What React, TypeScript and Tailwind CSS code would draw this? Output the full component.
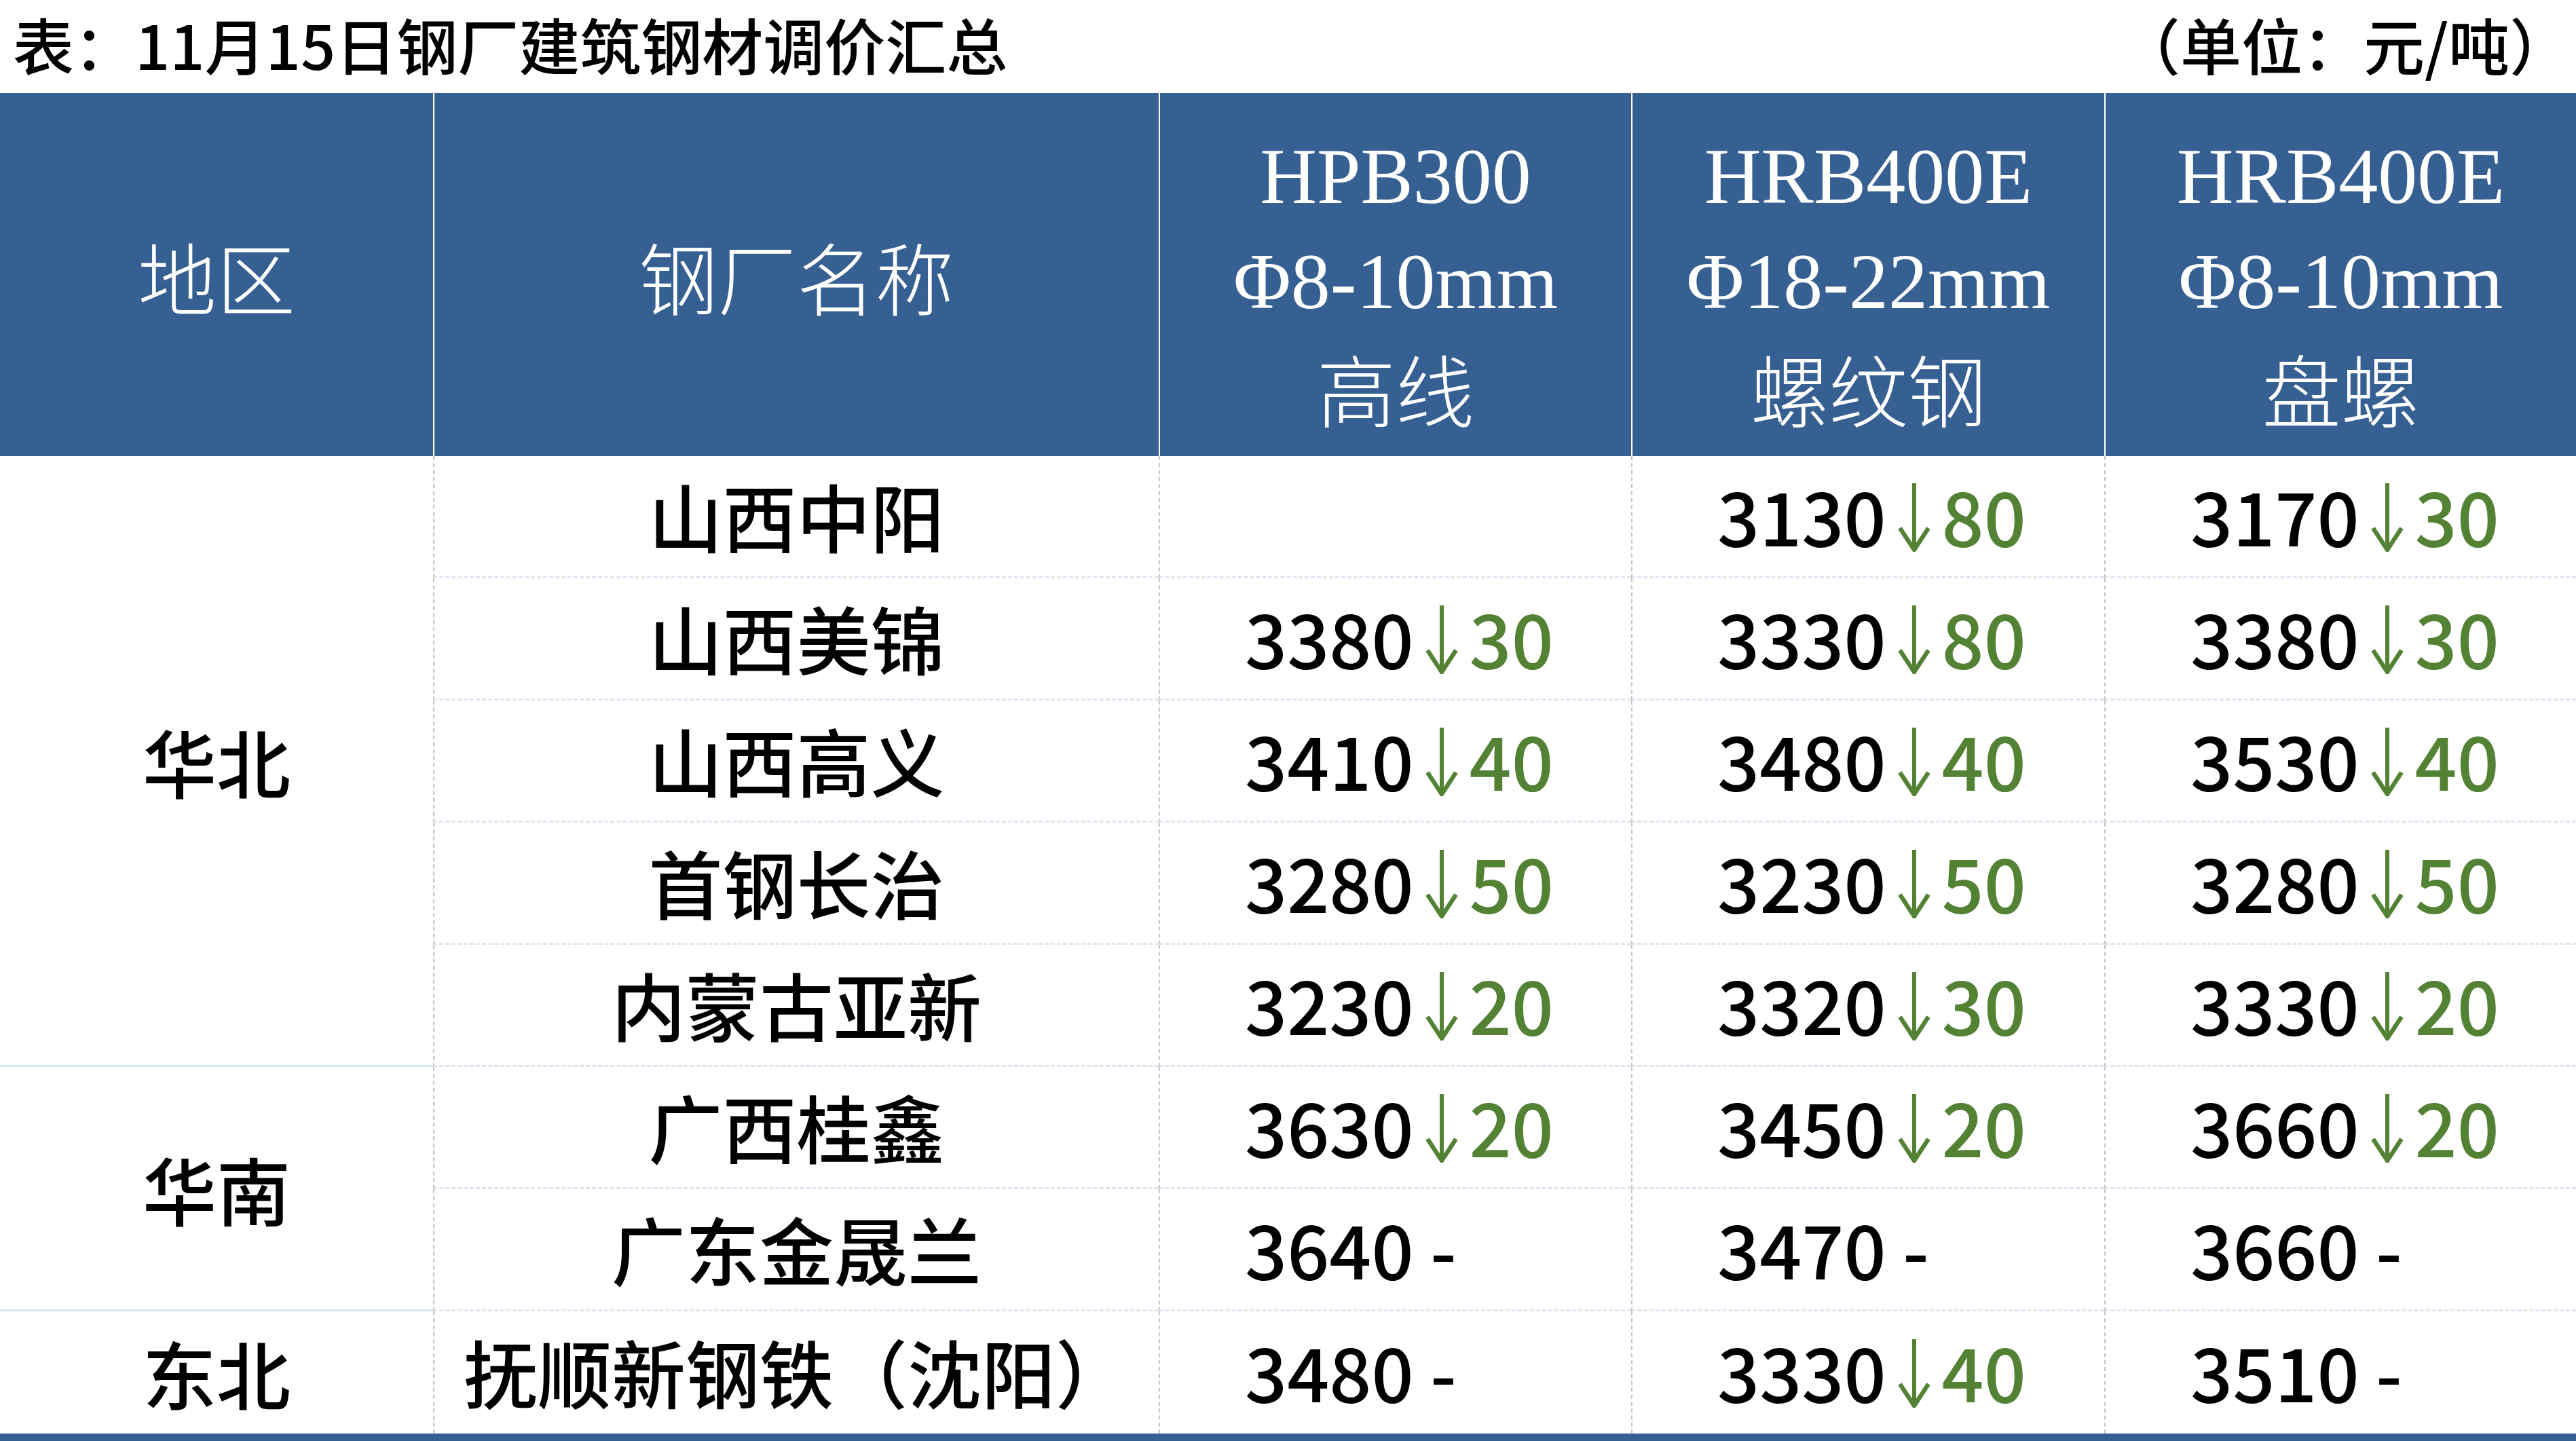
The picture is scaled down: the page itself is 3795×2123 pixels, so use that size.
const CJK = '"Noto Sans CJK SC", "Noto Sans", sans-serif';
const SERIF = '"Liberation Serif", "Noto Sans CJK SC", serif';

type Price = { base: string; change?: string };

type Row = {
  mill: string;
  prices: (Price | null)[];
};

const groups: { region: string; rows: Row[] }[] = [
  {
    region: '华北',
    rows: [
      { mill: '山西中阳', prices: [null, { base: '3130', change: '80' }, { base: '3170', change: '30' }] },
      { mill: '山西美锦', prices: [{ base: '3380', change: '30' }, { base: '3330', change: '80' }, { base: '3380', change: '30' }] },
      { mill: '山西高义', prices: [{ base: '3410', change: '40' }, { base: '3480', change: '40' }, { base: '3530', change: '40' }] },
      { mill: '首钢长治', prices: [{ base: '3280', change: '50' }, { base: '3230', change: '50' }, { base: '3280', change: '50' }] },
      { mill: '内蒙古亚新', prices: [{ base: '3230', change: '20' }, { base: '3320', change: '30' }, { base: '3330', change: '20' }] },
    ],
  },
  {
    region: '华南',
    rows: [
      { mill: '广西桂鑫', prices: [{ base: '3630', change: '20' }, { base: '3450', change: '20' }, { base: '3660', change: '20' }] },
      { mill: '广东金晟兰', prices: [{ base: '3640' }, { base: '3470' }, { base: '3660' }] },
    ],
  },
  {
    region: '东北',
    rows: [
      { mill: '抚顺新钢铁（沈阳）', prices: [{ base: '3480' }, { base: '3330', change: '40' }, { base: '3510' }] },
    ],
  },
];

const specs = [
  ['HPB300', 'Φ8-10mm', '高线'],
  ['HRB400E', 'Φ18-22mm', '螺纹钢'],
  ['HRB400E', 'Φ8-10mm', '盘螺'],
];

const rowSpan: Record<number, string> = {
  1: 'row-span-1',
  2: 'row-span-2',
  5: 'row-span-5',
};

// thin down arrow, drawn to match the glyph in the sheet
function DownArrow() {
  return (
    <svg width="82" height="101" viewBox="0 0 82 101" className="inline-block align-[-8px]">
      <line x1="41" y1="0" x2="41" y2="96" stroke="#548235" strokeWidth="6" />
      <polyline points="20,66 41,98 62,66" fill="none" stroke="#548235" strokeWidth="6.5" strokeLinejoin="miter" />
    </svg>
  );
}

function PriceCell({ price, last }: { price: Price | null; last: boolean }) {
  return (
    <div
      className={`flex items-center pl-[125px] pb-[6px] border-l-2 border-dashed border-l-[#c4c4c4] ${
        last ? '' : 'border-b-[3px] border-b-[#dce6f1]'
      }`}
    >
      {price && (
        <span className="whitespace-pre text-black">
          {price.base}
          {price.change ? (
            <span className="text-[#548235]">
              <DownArrow />
              {price.change}
            </span>
          ) : (
            ' -'
          )}
        </span>
      )}
    </div>
  );
}

export default function App() {
  return (
    <div className="w-[3795px] h-[2123px] bg-white overflow-hidden">
      <div
        className="h-[137px] flex items-center justify-between pl-[19px] pr-[8px] pb-[10px] text-[90px] leading-[110px] font-medium text-black"
        style={{ fontFamily: CJK }}
      >
        <span>表：11月15日钢厂建筑钢材调价汇总</span>
        <span>（单位：元/吨）</span>
      </div>

      <div className="grid grid-cols-[638px_1069px_696px_697px_695px] h-[535px] bg-[#376092] text-white text-[116px]">
        <div className="flex items-center justify-center font-light" style={{ fontFamily: CJK }}>
          地区
        </div>
        <div className="flex items-center justify-center font-light border-l-2 border-white" style={{ fontFamily: CJK }}>
          钢厂名称
        </div>
        {specs.map((s, i) => (
          <div key={i} className="flex flex-col items-center justify-center pt-[22px] border-l-2 border-white">
            <div className="leading-[155px]" style={{ fontFamily: SERIF }}>
              {s[0]}
            </div>
            <div className="leading-[155px]" style={{ fontFamily: SERIF }}>
              {s[1]}
            </div>
            <div className="leading-[155px] font-light" style={{ fontFamily: CJK }}>
              {s[2]}
            </div>
          </div>
        ))}
      </div>

      <div
        className="grid grid-cols-[638px_1069px_696px_697px_695px] grid-rows-[repeat(8,180px)] text-[109px] font-medium text-black border-b-[12px] border-[#376092]"
        style={{ fontFamily: CJK }}
      >
        {groups.map((g, gi) => {
          const lastGroup = gi === groups.length - 1;
          return [
            <div
              key={`r${gi}`}
              className={`${rowSpan[g.rows.length]} flex items-center justify-center ${
                lastGroup ? '' : 'border-b-[3px] border-b-[#dce6f1]'
              }`}
            >
              {g.region}
            </div>,
            ...g.rows.flatMap((r, ri) => {
              const last = lastGroup && ri === g.rows.length - 1;
              return [
                <div
                  key={`m${gi}-${ri}`}
                  className={`flex items-center justify-center pb-[4px] border-l-2 border-dashed border-l-[#c4c4c4] whitespace-nowrap ${
                    last ? '' : 'border-b-[3px] border-b-[#dce6f1]'
                  }`}
                >
                  {r.mill}
                </div>,
                ...r.prices.map((p, pi) => <PriceCell key={`p${gi}-${ri}-${pi}`} price={p} last={last} />),
              ];
            }),
          ];
        })}
      </div>
    </div>
  );
}
